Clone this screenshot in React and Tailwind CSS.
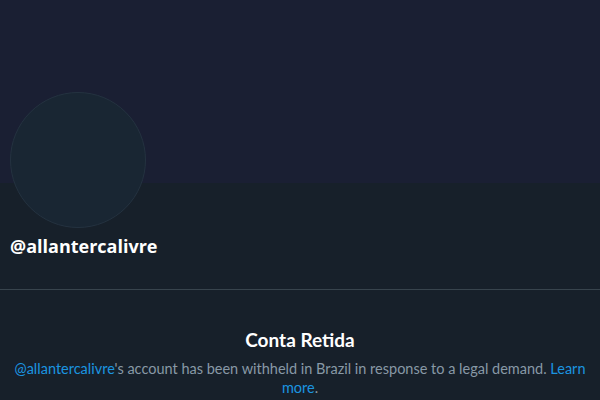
export default function App() {
  return (
    <div className="w-[600px] h-[400px] overflow-hidden bg-[#17202a] font-['Open_Sans',sans-serif]">
      <div className="h-[183px] bg-[#1a1f33]" />
      <div className="px-[10px]">
        <div className="-mt-[91px] w-[136px] h-[136px] rounded-full border border-[#243240] bg-[#192633]" />
        <div className="mt-[6px] text-white font-bold text-[18px] leading-[24px]">@allantercalivre</div>
      </div>
      <div className="mt-[31px] border-t border-[#38444d]" />
      <div className="pt-[37px] text-center font-['Lato',sans-serif]">
        <h1 className="text-white font-bold text-[19px] leading-[26px]">Conta Retida</h1>
        <p className="mt-[6px] px-[4px] text-[#8899a6] text-[14.5px] leading-[19px] whitespace-nowrap">
          <span className="text-[#1b95e0]">@allantercalivre</span>'s account has been withheld in Brazil in response to a legal demand.{" "}
          <span className="text-[#1b95e0]">Learn</span>
          <br />
          <span className="text-[#1b95e0]">more</span>.
        </p>
      </div>
    </div>
  );
}
